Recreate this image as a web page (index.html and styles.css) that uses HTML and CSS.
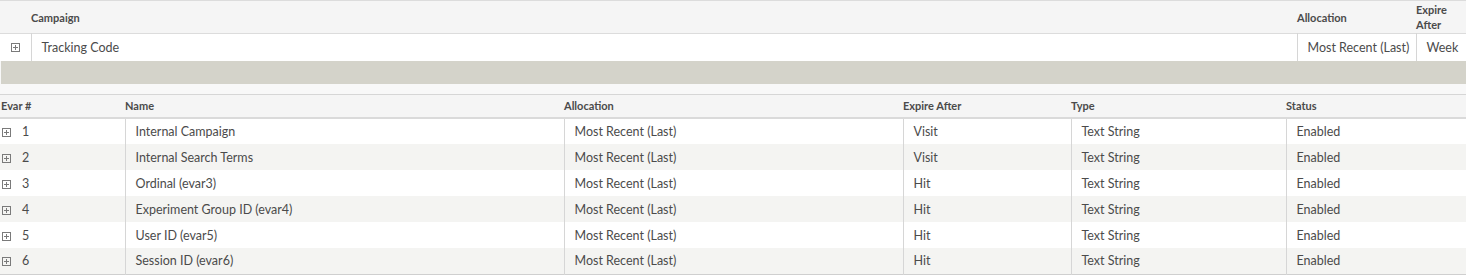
FILE: index.html
```html
<!DOCTYPE html>
<html>
<head>
<meta charset="utf-8">
<link rel="stylesheet" href="styles.css">
</head>
<body>
<div class="page">
  <table class="grid campaign">
    <colgroup>
      <col class="c-icon"><col class="c-camp"><col class="c-alloc"><col class="c-exp">
    </colgroup>
    <thead>
      <tr><th></th><th>Campaign</th><th>Allocation</th><th class="wrap">Expire After</th></tr>
    </thead>
    <tbody>
      <tr>
        <td class="icon-cell"><svg class="plus" width="9" height="9" viewBox="0 0 9 9"><rect x="0.5" y="0.5" width="8" height="8" fill="none" stroke="#7a7a7a"/><path d="M2 4.5H7M4.5 2V7" stroke="#7a7a7a"/></svg></td>
        <td class="cell">Tracking Code</td>
        <td class="cell">Most Recent (Last)</td>
        <td class="cell">Week</td>
      </tr>
    </tbody>
  </table>
  <div class="band"></div>
  <div class="gap"></div>
  <table class="grid evars">
    <colgroup>
      <col class="e-num"><col class="e-name"><col class="e-alloc"><col class="e-exp"><col class="e-type"><col class="e-status">
    </colgroup>
    <thead>
      <tr><th class="first">Evar #</th><th>Name</th><th>Allocation</th><th>Expire After</th><th>Type</th><th>Status</th></tr>
    </thead>
    <tbody>
      <tr><td class="num"><svg class="plus" width="9" height="9" viewBox="0 0 9 9"><rect x="0.5" y="0.5" width="8" height="8" fill="none" stroke="#7a7a7a"/><path d="M2 4.5H7M4.5 2V7" stroke="#7a7a7a"/></svg><span>1</span></td><td class="cell">Internal Campaign</td><td class="cell">Most Recent (Last)</td><td class="cell">Visit</td><td class="cell">Text String</td><td class="cell">Enabled</td></tr>
      <tr><td class="num"><svg class="plus" width="9" height="9" viewBox="0 0 9 9"><rect x="0.5" y="0.5" width="8" height="8" fill="none" stroke="#7a7a7a"/><path d="M2 4.5H7M4.5 2V7" stroke="#7a7a7a"/></svg><span>2</span></td><td class="cell">Internal Search Terms</td><td class="cell">Most Recent (Last)</td><td class="cell">Visit</td><td class="cell">Text String</td><td class="cell">Enabled</td></tr>
      <tr><td class="num"><svg class="plus" width="9" height="9" viewBox="0 0 9 9"><rect x="0.5" y="0.5" width="8" height="8" fill="none" stroke="#7a7a7a"/><path d="M2 4.5H7M4.5 2V7" stroke="#7a7a7a"/></svg><span>3</span></td><td class="cell">Ordinal (evar3)</td><td class="cell">Most Recent (Last)</td><td class="cell">Hit</td><td class="cell">Text String</td><td class="cell">Enabled</td></tr>
      <tr><td class="num"><svg class="plus" width="9" height="9" viewBox="0 0 9 9"><rect x="0.5" y="0.5" width="8" height="8" fill="none" stroke="#7a7a7a"/><path d="M2 4.5H7M4.5 2V7" stroke="#7a7a7a"/></svg><span>4</span></td><td class="cell">Experiment Group ID (evar4)</td><td class="cell">Most Recent (Last)</td><td class="cell">Hit</td><td class="cell">Text String</td><td class="cell">Enabled</td></tr>
      <tr><td class="num"><svg class="plus" width="9" height="9" viewBox="0 0 9 9"><rect x="0.5" y="0.5" width="8" height="8" fill="none" stroke="#7a7a7a"/><path d="M2 4.5H7M4.5 2V7" stroke="#7a7a7a"/></svg><span>5</span></td><td class="cell">User ID (evar5)</td><td class="cell">Most Recent (Last)</td><td class="cell">Hit</td><td class="cell">Text String</td><td class="cell">Enabled</td></tr>
      <tr><td class="num"><svg class="plus" width="9" height="9" viewBox="0 0 9 9"><rect x="0.5" y="0.5" width="8" height="8" fill="none" stroke="#7a7a7a"/><path d="M2 4.5H7M4.5 2V7" stroke="#7a7a7a"/></svg><span>6</span></td><td class="cell">Session ID (evar6)</td><td class="cell">Most Recent (Last)</td><td class="cell">Hit</td><td class="cell">Text String</td><td class="cell">Enabled</td></tr>
    </tbody>
  </table>
</div>
</body>
</html>
```
FILE: styles.css
```css
html, body {
  margin: 0;
  padding: 0;
  background: #ffffff;
}
body {
  font-family: Lato, "Noto Sans", "Liberation Sans", sans-serif;
  color: #4b4b4b;
}
.page {
  width: 1466px;
  background: #f8f8f8;
}
.grid {
  width: 1466px;
  border-collapse: collapse;
  table-layout: fixed;
}
.grid th {
  font-size: 11px;
  font-weight: 700;
  color: #4b4b4b;
  text-align: left;
  padding: 0;
  line-height: 15px;
}
.grid td {
  font-size: 12.5px;
  padding: 0;
  white-space: nowrap;
}
.c-icon { width: 31px; }
.c-camp { width: 1266px; }
.c-alloc { width: 119px; }
.c-exp { width: 50px; }

.campaign {
  border-top: 1px solid #dcdcdc;
}
.campaign thead tr {
  height: 33px;
  background: #f5f5f5;
  border-bottom: 1px solid #dcdcdc;
}
.campaign th.wrap {
  white-space: normal;
  padding-right: 8px;
}
.campaign tbody tr {
  height: 27px;
  background: #ffffff;
}
.campaign .icon-cell {
  text-align: center;
  line-height: 0;
}
.campaign td.cell {
  border-left: 1px solid #d6d6d6;
  padding-left: 10px;
}
.band {
  height: 23px;
  margin-left: 1px;
  background: #d4d3ca;
}
.gap {
  height: 10px;
}
.evars {
  border-top: 1px solid #d6d6d6;
  border-bottom: 1px solid #cfcfcf;
}
.e-num { width: 125px; }
.e-name { width: 439px; }
.e-alloc { width: 339px; }
.e-exp { width: 168px; }
.e-type { width: 215px; }
.e-status { width: 180px; }
.evars thead tr {
  height: 24px;
  background: #f5f5f5;
  border-bottom: 2px solid #dadada;
}
.evars th.first {
  padding-left: 1px;
}
.evars tbody tr {
  height: 26px;
  background: #ffffff;
}
.evars tbody tr:nth-child(even) {
  background: #f4f4f2;
}
.evars td.cell {
  border-left: 1px solid #d6d6d6;
  padding-left: 10px;
}
.evars td.num {
  padding-left: 2px;
}
.num .plus {
  vertical-align: -1px;
}
.num span {
  margin-left: 11px;
}
```
